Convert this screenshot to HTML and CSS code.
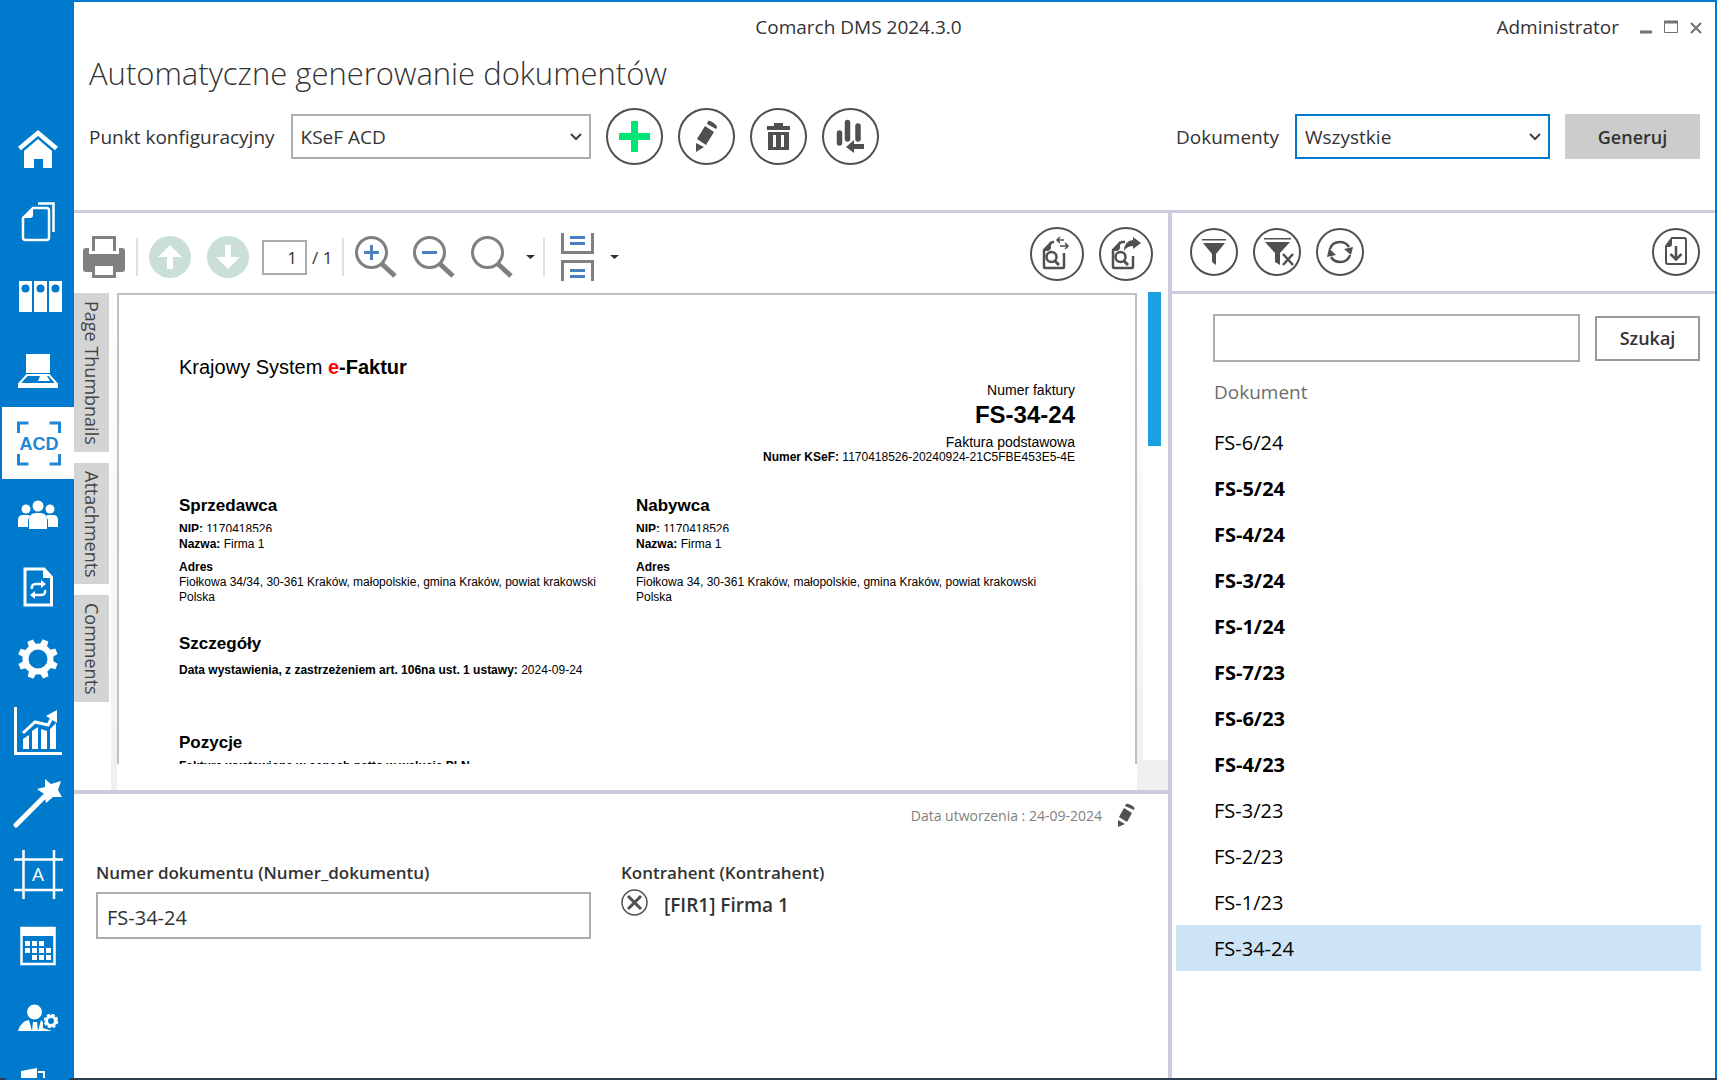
FILE: index.html
```html
<!DOCTYPE html>
<html lang="pl">

<head>
    <meta charset="UTF-8">
    <meta name="viewport" content="width=device-width, initial-scale=1.0">
    <title>Comarch DMS 2024.3.0</title>
    <link rel="stylesheet" href="styles.css">
</head>

<body>
    <div class="window">
        <nav class="sidebar">
            <a href="#" aria-label="Start">
                <svg viewBox="0 0 74 72">
                    <path d="M19.500 29.500 38 14 56.500 29.500" fill="none" stroke="#fff" stroke-width="4.500" />
                    <path d="M38 20 52 32V49H43V40H34V49H24V32Z" />
                </svg>
            </a>
            <a href="#" aria-label="Dokumenty">
                <svg viewBox="0 0 74 72">
                    <path d="M38 12.500H53.500V41" fill="none" stroke="#fff" stroke-width="2.500" />
                    <path d="M33 17H46.500Q49 17 49 19.500V46.500Q49 49 46.500 49H25.500Q23 49 23 46.500V27Z" fill="none" stroke="#fff" stroke-width="2.500" />
                    <path d="M33 17V24Q33 27 30 27H23Z" />
                </svg>
            </a>
            <a href="#" aria-label="Segregatory">
                <svg viewBox="0 0 74 72">
                    <path d="M19 18H32V49H19ZM34 18H47V49H34ZM49 18H62V49H49Z" />
                    <g class="cut">
                        <circle cx="25.500" cy="25.500" r="4" />
                        <circle cx="40.500" cy="25.500" r="4" />
                        <circle cx="55.500" cy="25.500" r="4" />
                    </g>
                </svg>
            </a>
            <a href="#" aria-label="Stanowisko">
                <svg viewBox="0 0 74 72">
                    <path d="M26 19H50V38H26Z" />
                    <path d="M27 40H49L57 49V52H19V49Z" fill="none" stroke="#fff" stroke-width="2" />
                    <path d="M19 48H57V52H19Z" />
                    <path d="M40 41H47L50 46H38Z" />
                </svg>
            </a>
            <a href="#" class="active" aria-label="Automatyczne generowanie dokumentów">
                <svg viewBox="0 0 74 72">
                    <path d="M18.500 26V16H28.500M49.500 16H59.500V26M59.500 47V57H49.500M28.500 57H18.500V47" fill="none" stroke="#1f87d6" stroke-width="3" />
                    <text x="39" y="43" class="acd">ACD</text>
                </svg>
            </a>
            <a href="#" aria-label="Pracownicy">
                <svg viewBox="0 0 74 72">
                    <circle cx="26" cy="30" r="4.500" />
                    <circle cx="50" cy="30" r="4.500" />
                    <circle cx="38" cy="27" r="5.500" />
                    <path d="M18 48V41Q18 36 23 36H28Q31 36 29 39 28 40 28 43V48ZM58 48V41Q58 36 53 36H48Q45 36 47 39 48 40 48 43V48Z" />
                    <path d="M29 50V41Q29 34 36 34H40Q47 34 47 41V50Z" />
                </svg>
            </a>
            <a href="#" aria-label="Obieg">
                <svg viewBox="0 0 74 72">
                    <path d="M25 18H44L51.500 26V54H25Z" fill="none" stroke="#fff" stroke-width="3" />
                    <path d="M43 17 53 27H43Z" />
                    <path d="M32 38Q31 33 36 33H42M45 39Q46 44 41 44H35" fill="none" stroke="#fff" stroke-width="2.500" />
                    <path d="M41 29 46 33 41 37ZM35 40 30 44 35 48Z" />
                </svg>
            </a>
            <a href="#" aria-label="Ustawienia">
                <svg viewBox="0 0 74 72">
                    <circle cx="38" cy="36" r="12.500" fill="none" stroke="#fff" stroke-width="6" />
                    <path d="M34 23 35 16H41L42 23Z" transform="rotate(22 38 36)" />
                    <path d="M34 23 35 16H41L42 23Z" transform="rotate(67 38 36)" />
                    <path d="M34 23 35 16H41L42 23Z" transform="rotate(112 38 36)" />
                    <path d="M34 23 35 16H41L42 23Z" transform="rotate(157 38 36)" />
                    <path d="M34 23 35 16H41L42 23Z" transform="rotate(202 38 36)" />
                    <path d="M34 23 35 16H41L42 23Z" transform="rotate(247 38 36)" />
                    <path d="M34 23 35 16H41L42 23Z" transform="rotate(292 38 36)" />
                    <path d="M34 23 35 16H41L42 23Z" transform="rotate(337 38 36)" />
                </svg>
            </a>
            <a href="#" aria-label="Raporty">
                <svg viewBox="0 0 74 72">
                    <path d="M15.500 12V58.500H62" fill="none" stroke="#fff" stroke-width="3" />
                    <path d="M23 44 29 40V54H23ZM32 36 38 32V54H32ZM41 34 47 36V54H41ZM50 34 56 28V54H50Z" />
                    <path d="M23 38 35 27 48 30 54 19" fill="none" stroke="#fff" stroke-width="3" />
                    <path d="M46 21 57 15V28Z" />
                </svg>
            </a>
            <a href="#" aria-label="Kreator">
                <svg viewBox="0 0 74 72">
                    <path d="M16 58 44 30" fill="none" stroke="#fff" stroke-width="5" stroke-linecap="round" />
                    <path d="M45 12 51 17 61 14 58 23 62 30 53 30 46 36 44 27 37 22 45 20Z" />
                </svg>
            </a>
            <a href="#" aria-label="Szablony">
                <svg viewBox="0 0 74 72">
                    <path d="M14 20.500H63M14 51H63M23.500 11V60M54 11V60" fill="none" stroke="#fff" stroke-width="2.500" />
                    <text x="38" y="42" class="letter">A</text>
                </svg>
            </a>
            <a href="#" aria-label="Kalendarz">
                <svg viewBox="0 0 74 72">
                    <path d="M21.500 17H54.500V53H21.500Z" fill="none" stroke="#fff" stroke-width="2.500" />
                    <path d="M21 16H55V25H21Z" />
                    <path d="M25 30h5v5h-5zM32 30h5v5h-5zM39 30h5v5h-5zM25 37h5v5h-5zM32 37h5v5h-5zM39 37h5v5h-5zM46 37h5v5h-5zM32 44h5v5h-5zM39 44h5v5h-5zM46 44h5v5h-5z" />
                </svg>
            </a>
            <a href="#" aria-label="Uprawnienia">
                <svg viewBox="0 0 74 72">
                    <circle cx="34.500" cy="29" r="7.500" />
                    <path d="M18 48Q21 38 29 37L32 48ZM33 39H37L38 48H32ZM41 37 43 39 43 45 52 48H38Z" />
                    <circle cx="51" cy="38" r="4.500" fill="none" stroke="#fff" stroke-width="3" />
                    <circle cx="51" cy="38" r="6" fill="none" stroke="#fff" stroke-width="2.500" stroke-dasharray="3 1.700" />
                </svg>
            </a>
            <a href="#" aria-label="Biblioteka">
                <svg viewBox="0 0 74 72">
                    <path d="M21 16 37 13V40H21Z" />
                    <path d="M38 17H44V40" fill="none" stroke="#fff" stroke-width="2" />
                </svg>
            </a>
        </nav>

        <main class="main">
            <header class="header">
                <div class="titlebar">
                    <span class="app-name">Comarch DMS 2024.3.0</span>
                    <span class="user">Administrator</span>
                    <button type="button" class="win-btn" aria-label="Minimalizuj">
                        <svg viewBox="0 0 14 14"><path d="M1 12H13" stroke-width="3" /></svg>
                    </button>
                    <button type="button" class="win-btn" aria-label="Maksymalizuj">
                        <svg viewBox="0 0 14 14"><path d="M.500 2H13.500V12.500H.500Z" /><path d="M0 2H14" stroke-width="3" /></svg>
                    </button>
                    <button type="button" class="win-btn" aria-label="Zamknij">
                        <svg viewBox="0 0 14 14"><path d="M2 3 12 13M12 3 2 13" stroke-width="2" /></svg>
                    </button>
                </div>
                <h1>Automatyczne generowanie dokumentów</h1>
                <div class="config">
                    <label for="point">Punkt konfiguracyjny</label>
                    <div class="select point">
                        <select id="point"><option>KSeF ACD</option></select>
                        <svg viewBox="0 0 12 8"><path d="M1 1 6 6 11 1" /></svg>
                    </div>
                    <div class="config-actions">
                        <button type="button" class="round" aria-label="Dodaj">
                            <svg viewBox="0 0 57 57"><path d="M25 13h7v12h12v7H32v12h-7V32H13v-7h12z" fill="#00e676" /></svg>
                        </button>
                        <button type="button" class="round" aria-label="Edytuj">
                            <svg viewBox="0 0 57 57">
                                <path d="M30 13Q32 12 38 17 40 19 38 21L29 16ZM27 18 36 24 28 37 19 31ZM18 35 26 39 18 44Z" />
                            </svg>
                        </button>
                        <button type="button" class="round" aria-label="Usuń">
                            <svg viewBox="0 0 57 57">
                                <path d="M24 15H33V18H40V22H17V18H24Z" />
                                <path d="M18 24H39V42H18ZM23 27V39H26V27ZM31 27V39H34V27Z" fill-rule="evenodd" />
                            </svg>
                        </button>
                        <button type="button" class="round" aria-label="Kolejność">
                            <svg viewBox="0 0 57 57">
                                <path d="M17.500 25V35M25.500 14.500V31M36 18V31" fill="none" stroke="#505050" stroke-width="5.500" stroke-linecap="round" />
                                <path d="M24 39 32 32V36H42V41H32V45Z" />
                            </svg>
                        </button>
                    </div>
                    <label for="docs">Dokumenty</label>
                    <div class="select docs">
                        <select id="docs"><option>Wszystkie</option></select>
                        <svg viewBox="0 0 12 8"><path d="M1 1 6 6 11 1" /></svg>
                    </div>
                    <button type="button" class="generate">Generuj</button>
                </div>
            </header>

            <div class="content">
                <section class="left">
                    <div class="toolbar">
                        <button type="button" class="tool" aria-label="Drukuj">
                            <svg viewBox="0 0 42 42">
                                <path d="M0 15Q0 12 3 12H6V18H36V12H39Q42 12 42 15V33Q42 36 39 36H3Q0 36 0 33Z" fill="#808080" />
                                <path d="M10.500 15V1.500H31.500V15" fill="#fff" stroke="#808080" stroke-width="3" />
                                <path d="M10.500 28.500H31.500V40.500H10.500Z" fill="#fff" stroke="#808080" stroke-width="3" />
                            </svg>
                        </button>
                        <span class="sep"></span>
                        <button type="button" class="tool gap" aria-label="Poprzednia strona">
                            <svg viewBox="0 0 42 42">
                                <circle cx="21" cy="21" r="21" fill="#cadfd8" />
                                <path d="M21 9 33 21H24V33H18V21H9Z" fill="#fff" />
                            </svg>
                        </button>
                        <button type="button" class="tool gap" aria-label="Następna strona">
                            <svg viewBox="0 0 42 42">
                                <circle cx="21" cy="21" r="21" fill="#cadfd8" />
                                <path d="M21 33 33 21H24V9H18V21H9Z" fill="#fff" />
                            </svg>
                        </button>
                        <input type="text" class="page-no" value="1" aria-label="Strona">
                        <span class="page-count">/ 1</span>
                        <span class="sep"></span>
                        <button type="button" class="tool gap" aria-label="Powiększ">
                            <svg viewBox="0 0 42 42" class="lens">
                                <circle cx="16.500" cy="16.500" r="15" />
                                <path d="M27 28 40 40" stroke-width="5" />
                                <path d="M16.500 9V24M9 16.500H24" class="sign" />
                            </svg>
                        </button>
                        <button type="button" class="tool gap" aria-label="Pomniejsz">
                            <svg viewBox="0 0 42 42" class="lens">
                                <circle cx="16.500" cy="16.500" r="15" />
                                <path d="M27 28 40 40" stroke-width="5" />
                                <path d="M9 16.500H24" class="sign" />
                            </svg>
                        </button>
                        <button type="button" class="tool" aria-label="Skala">
                            <svg viewBox="0 0 42 42" class="lens">
                                <circle cx="16.500" cy="16.500" r="15" />
                                <path d="M27 28 40 40" stroke-width="5" />
                            </svg>
                        </button>
                        <svg class="caret" viewBox="0 0 9 4"><path d="M0 0H9L4.500 4Z" /></svg>
                        <span class="sep"></span>
                        <button type="button" class="tool fit" aria-label="Układ stron">
                            <svg viewBox="0 0 33 48">
                                <path d="M1.500 0V19.500H31.500V0M1.500 48V28.500H31.500V48" fill="none" stroke="#808080" stroke-width="3" />
                                <path d="M9 4.500H24M9 10.500H24M9 37.500H24M9 43.500H24" fill="none" stroke="#4a80bd" stroke-width="3" />
                            </svg>
                        </button>
                        <svg class="caret" viewBox="0 0 9 4"><path d="M0 0H9L4.500 4Z" /></svg>
                        <div class="toolbar-end">
                            <button type="button" class="round medium" aria-label="Zamień dokument">
                                <svg viewBox="0 0 54 54">
                                    <path d="M22 15 14 23V40Q14 41 15 41H33Q34 41 34 40V26M22 15H24" fill="none" stroke="#505050" stroke-width="2.500" />
                                    <path d="M21 14V20Q21 24 17 24H13Z" />
                                    <circle cx="21.500" cy="30" r="5" fill="none" stroke="#505050" stroke-width="2.500" />
                                    <path d="M25 34 29 38" stroke="#505050" stroke-width="3" />
                                    <path d="M34 13H27M30 10 27 13 30 16M30 19H38M35 16 38 19 35 22" fill="none" stroke="#505050" stroke-width="1.500" />
                                </svg>
                            </button>
                            <button type="button" class="round medium" aria-label="Przekaż dokument">
                                <svg viewBox="0 0 54 54">
                                    <path d="M22 15 14 23V40Q14 41 15 41H33Q34 41 34 40V29M22 15H26" fill="none" stroke="#505050" stroke-width="2.500" />
                                    <path d="M21 14V20Q21 24 17 24H13Z" />
                                    <circle cx="21.500" cy="30" r="5" fill="none" stroke="#505050" stroke-width="2.500" />
                                    <path d="M25 34 29 38" stroke="#505050" stroke-width="3" />
                                    <path d="M25 24Q25 14 34 13V10L42 16 34 22V19Q28 19 25 24Z" />
                                </svg>
                            </button>
                        </div>
                    </div>

                    <div class="viewer">
                        <div class="tabs">
                            <button type="button">Page Thumbnails</button>
                            <button type="button">Attachments</button>
                            <button type="button">Comments</button>
                        </div>
                        <div class="edge"></div>
                        <article class="page">
                            <p class="ksef">Krajowy System <b><span class="red">e</span>-Faktur</b></p>
                            <div class="invoice-no">
                                <p class="caption">Numer faktury</p>
                                <p class="number">FS-34-24</p>
                                <p class="kind">Faktura podstawowa</p>
                                <p><b>Numer KSeF:</b> 1170418526-20240924-21C5FBE453E5-4E</p>
                            </div>
                            <div class="parties">
                                <div>
                                    <h2>Sprzedawca</h2>
                                    <p class="nip"><b>NIP:</b> 1170418526</p>
                                    <p><b>Nazwa:</b> Firma 1</p>
                                    <h3>Adres</h3>
                                    <p>Fiołkowa 34/34, 30-361 Kraków, małopolskie, gmina Kraków, powiat krakowski</p>
                                    <p>Polska</p>
                                </div>
                                <div>
                                    <h2>Nabywca</h2>
                                    <p class="nip"><b>NIP:</b> 1170418526</p>
                                    <p><b>Nazwa:</b> Firma 1</p>
                                    <h3>Adres</h3>
                                    <p>Fiołkowa 34, 30-361 Kraków, małopolskie, gmina Kraków, powiat krakowski</p>
                                    <p>Polska</p>
                                </div>
                            </div>
                            <h2 class="details-title">Szczegóły</h2>
                            <p><b>Data wystawienia, z zastrzeżeniem art. 106na ust. 1 ustawy:</b> 2024-09-24</p>
                            <h2 class="items-title">Pozycje</h2>
                            <p><b>Faktura wystawiona w cenach netto w walucie PLN</b></p>
                        </article>
                        <div class="edge"></div>
                        <div class="scroll"><div class="thumb"></div><div class="corner"></div></div>
                    </div>

                    <form class="details">
                        <div class="created">
                            <span>Data utworzenia : 24-09-2024</span>
                            <button type="button" aria-label="Edytuj atrybuty">
                                <svg viewBox="0 0 17 24">
                                    <path d="M8 1Q10 0 16 4 17 5 16 7L7 3ZM6 5 14 10 9 19 1 14ZM0 17 7 21 0 24Z" />
                                </svg>
                            </button>
                        </div>
                        <div class="fields">
                            <div class="field">
                                <label for="doc-no">Numer dokumentu (Numer_dokumentu)</label>
                                <input type="text" id="doc-no" value="FS-34-24">
                            </div>
                            <div class="field">
                                <span class="field-name">Kontrahent (Kontrahent)</span>
                                <div class="contractor">
                                    <button type="button" aria-label="Usuń kontrahenta">
                                        <svg viewBox="0 0 27 27">
                                            <circle cx="13.500" cy="13.500" r="12.500" stroke-width="1.500" />
                                            <path d="M7 7 20 20M20 7 7 20" stroke-width="3" />
                                        </svg>
                                    </button>
                                    <span>[FIR1] Firma 1</span>
                                </div>
                            </div>
                        </div>
                    </form>
                </section>

                <section class="right">
                    <div class="list-toolbar">
                        <button type="button" class="round small" aria-label="Filtruj">
                            <svg viewBox="0 0 48 48">
                                <path d="M12 11H36V12.500H12ZM13 15H35L26 26V37L22 34V26Z" />
                            </svg>
                        </button>
                        <button type="button" class="round small" aria-label="Wyczyść filtr">
                            <svg viewBox="0 0 48 48">
                                <path d="M11 10H38V11.500H11ZM12 14H37L27 25V37L22 34V25Z" />
                                <path d="M30 26 40 37M40 26 30 37" stroke="#505050" stroke-width="2.500" />
                            </svg>
                        </button>
                        <button type="button" class="round small" aria-label="Odśwież">
                            <svg viewBox="0 0 48 48">
                                <path d="M14 21Q16 14 24 14 30 14 33 19M34 27Q32 34 24 34 18 34 15 29" fill="none" stroke="#505050" stroke-width="2.500" />
                                <path d="M28 21 37 19 35 27ZM20 27 11 29 13 20Z" />
                            </svg>
                        </button>
                        <button type="button" class="round small last" aria-label="Importuj">
                            <svg viewBox="0 0 48 48">
                                <path d="M20 10H32Q34 10 34 12V34Q34 36 32 36H16Q14 36 14 34V18Z" fill="none" stroke="#505050" stroke-width="2" />
                                <path d="M20 10V16Q20 19 17 19H14Z" />
                                <path d="M24 18V31M18.500 26 24 31.500 29.500 26" fill="none" stroke="#505050" stroke-width="2.500" />
                            </svg>
                        </button>
                    </div>
                    <form class="search">
                        <input type="text" aria-label="Szukany dokument">
                        <button type="button">Szukaj</button>
                    </form>
                    <table class="list">
                        <thead><tr><th>Dokument</th></tr></thead>
                        <tbody>
                            <tr><td>FS-6/24</td></tr>
                            <tr class="new"><td>FS-5/24</td></tr>
                            <tr class="new"><td>FS-4/24</td></tr>
                            <tr class="new"><td>FS-3/24</td></tr>
                            <tr class="new"><td>FS-1/24</td></tr>
                            <tr class="new"><td>FS-7/23</td></tr>
                            <tr class="new"><td>FS-6/23</td></tr>
                            <tr class="new"><td>FS-4/23</td></tr>
                            <tr><td>FS-3/23</td></tr>
                            <tr><td>FS-2/23</td></tr>
                            <tr><td>FS-1/23</td></tr>
                            <tr class="selected"><td>FS-34-24</td></tr>
                        </tbody>
                    </table>
                </section>
            </div>
        </main>
    </div>
    <div class="taskbar"><span></span></div>
</body>

</html>
```
FILE: styles.css
```css
* {
    box-sizing: border-box;
}

body {
    margin: 0;
    height: 100vh;
    display: flex;
    flex-direction: column;
    overflow: hidden;
    background: #fff;
    color: #333;
    font-family: "Open Sans", "Noto Sans", sans-serif;
    font-size: 19px;
}

h1, h2, h3, p {
    margin: 0;
}

svg {
    display: block;
}

button, input, select {
    font: inherit;
    color: inherit;
    margin: 0;
    padding: 0;
    border: none;
    border-radius: 0;
    background: none;
}

button {
    cursor: pointer;
}

.window {
    flex: 1;
    min-height: 0;
    display: flex;
    border: 2px solid #007acc;
    border-left: none;
    border-bottom: none;
}

.taskbar {
    height: 2px;
    padding-left: 6px;
    background: #2f3e4e;
}

.taskbar span {
    display: block;
    width: 63px;
    height: 2px;
    background: #007acc;
}

/* sidebar */
.sidebar {
    flex: none;
    width: 74px;
    padding-top: 117px;
    overflow: hidden;
    background: #007acc;
}

.sidebar a {
    display: block;
    height: 72px;
}

.sidebar svg {
    width: 74px;
    height: 72px;
    fill: #fff;
}

.sidebar .cut {
    fill: #007acc;
}

.sidebar .active {
    background: #fff;
    border-left: 2px solid #007acc;
}

.sidebar .active svg {
    margin-left: -2px;
}

.acd {
    fill: #1f87d6;
    font: bold 18px "Liberation Sans", sans-serif;
    text-anchor: middle;
}

.letter {
    font-size: 19px;
    text-anchor: middle;
}

/* header */
.main {
    flex: 1;
    min-width: 0;
    display: flex;
    flex-direction: column;
}

.header {
    height: 211px;
    border-bottom: 3px solid #cbcddc;
    padding: 0 15px;
}

.titlebar {
    display: grid;
    grid-template-columns: 1fr auto 1fr 14px 14px 14px;
    align-items: center;
    height: 50px;
    column-gap: 11px;
    margin-right: -3px;
}

.app-name {
    grid-column: 2;
}

.user {
    justify-self: end;
    margin-right: 9px;
}

.win-btn svg {
    width: 14px;
    height: 14px;
    fill: none;
    stroke: #707070;
    stroke-width: 1;
}

h1 {
    font-size: 31px;
    font-weight: 300;
    line-height: 42px;
    color: #333;
}

.config {
    display: flex;
    align-items: center;
    margin-top: 14px;
    height: 57px;
}

.config-actions {
    display: flex;
    gap: 15px;
    margin: 0 auto 0 15px;
}

.select {
    position: relative;
    height: 45px;
    margin-left: 16px;
}

.select select {
    appearance: none;
    width: 100%;
    height: 45px;
    padding: 0 8px;
    border: 2px solid #abadb3;
    background: #fff;
}

.select svg {
    position: absolute;
    right: 9px;
    top: 19px;
    width: 12px;
    height: 8px;
    fill: none;
    stroke: #404040;
    stroke-width: 2;
    pointer-events: none;
}

.point {
    width: 300px;
}

.docs {
    width: 255px;
}

.docs select {
    border-color: #007acc;
}

.generate {
    width: 135px;
    height: 45px;
    margin-left: 15px;
    background: #ccc;
    font-size: 18px;
    font-weight: 600;
}

.round {
    flex: none;
    width: 57px;
    height: 57px;
    border: 2px solid #505050;
    border-radius: 50%;
}

.round svg {
    width: 57px;
    height: 57px;
    margin: -2px;
    fill: #505050;
}

.round.medium, .medium svg {
    width: 54px;
    height: 54px;
}

.round.small, .small svg {
    width: 48px;
    height: 48px;
}

/* document preview */
.content {
    flex: 1;
    min-height: 0;
    display: flex;
}

.left {
    flex: 1;
    min-width: 0;
    display: flex;
    flex-direction: column;
}

.toolbar {
    flex: none;
    display: flex;
    align-items: center;
    height: 79px;
    padding: 9px 15px 0 9px;
}

.tool svg {
    width: 42px;
    height: 42px;
}

.tool.gap {
    margin-right: 16px;
}

.sep {
    width: 2px;
    height: 38px;
    margin: 0 11px;
    background: #e0e0e0;
}

.page-no {
    width: 45px;
    height: 35px;
    margin-left: -3px;
    padding-right: 8px;
    border: 2px solid #ababab;
    text-align: right;
    font-size: 17px;
}

.page-count {
    width: 22px;
    margin-left: 5px;
    margin-right: -3px;
    font-size: 17px;
    white-space: nowrap;
}

.lens {
    fill: none;
    stroke: #808080;
    stroke-width: 3;
}

.lens .sign {
    stroke: #4a80bd;
}

.caret {
    flex: none;
    width: 9px;
    height: 4px;
    margin-left: 13px;
    fill: #303030;
}

.caret + .sep {
    margin: 0 16px 0 8px;
}

.tool.fit svg {
    width: 33px;
    height: 48px;
}

.fit + .caret {
    margin-left: 16px;
}

.toolbar-end {
    display: flex;
    gap: 15px;
    margin: -6px 0 0 auto;
}

.viewer {
    flex: 1;
    min-height: 0;
    display: flex;
}

.tabs {
    flex: none;
    width: 37px;
    display: flex;
    flex-direction: column;
    align-items: flex-start;
    gap: 11px;
    padding-top: 1px;
}

.tabs button {
    width: 35px;
    padding: 8px 0 7px;
    background: #d4d4d4;
    writing-mode: vertical-rl;
    line-height: 35px;
    color: #444;
    font-size: 18px;
}

.edge {
    flex: none;
    width: 6px;
    background: linear-gradient(#fff, #f0f0f0);
}

.page {
    flex: 1;
    min-width: 0;
    margin: 1px 0 26px;
    padding: 59px 60px 0;
    overflow: hidden;
    border: 2px solid #c0c0c0;
    border-bottom: none;
    background: #fff;
    color: #000;
    font-family: "Liberation Sans", Arial, sans-serif;
    font-size: 12px;
    line-height: 15px;
}

.ksef {
    font-size: 20px;
    line-height: 26px;
}

.red {
    color: #f00;
}

.invoice-no {
    margin-top: 1px;
    text-align: right;
}

.caption {
    font-size: 14px;
    line-height: 18px;
}

.number {
    font-size: 24px;
    font-weight: bold;
    line-height: 32px;
    margin-bottom: 3px;
}

.kind {
    font-size: 14px;
    line-height: 16px;
}

.page h2 {
    font-size: 17px;
    line-height: 22px;
    margin-bottom: 5px;
}

.page h3 {
    font-size: 12px;
    line-height: 15px;
    margin-top: 8px;
}

.parties {
    display: grid;
    grid-template-columns: 1fr 1fr;
    gap: 18px;
    margin-top: 30px;
}

.nip {
    height: 10px;
    margin-bottom: 5px;
    overflow: hidden;
}

.page .details-title {
    margin-top: 28px;
    margin-bottom: 8px;
}

.page .items-title {
    margin-top: 54px;
}

.scroll {
    flex: none;
    width: 25px;
    display: flex;
    flex-direction: column;
    justify-content: space-between;
}

.thumb {
    width: 13px;
    height: 154px;
    margin-left: 5px;
    background: #1ba1e2;
}

.corner {
    height: 30px;
    margin-left: -4px;
    background: #f0f0f0;
}

/* attributes */
.details {
    flex: none;
    height: 288px;
    border-top: 4px solid #cbcddc;
    padding: 8px 33px 0 22px;
}

.created {
    display: flex;
    justify-content: flex-end;
    align-items: center;
    gap: 16px;
    height: 26px;
    font-size: 14px;
    color: #808080;
}

.created svg {
    width: 17px;
    height: 24px;
    fill: #505050;
}

.fields {
    display: flex;
    gap: 30px;
    margin-top: 32px;
}

.field:first-child {
    width: 495px;
}

.field label, .field-name {
    display: block;
    font-size: 17px;
    font-weight: 600;
    line-height: 26px;
}

.field input {
    width: 100%;
    height: 47px;
    margin-top: 6px;
    padding: 4px 9px 0;
    border: 2px solid #abadb3;
    font-size: 20px;
}

.contractor {
    display: flex;
    gap: 16px;
    align-items: flex-start;
    padding-top: 3px;
    font-weight: 600;
    line-height: 33px;
}

.contractor svg {
    width: 27px;
    height: 27px;
    fill: none;
    stroke: #505050;
}

/* document list */
.right {
    flex: none;
    width: 547px;
    border-left: 4px solid #cbcddc;
}

.list-toolbar {
    display: flex;
    align-items: center;
    gap: 15px;
    height: 81px;
    padding: 0 15px 1px 18px;
    border-bottom: 3px solid #cbcddc;
}

.list-toolbar .last {
    margin-left: auto;
}

.search {
    display: flex;
    align-items: center;
    gap: 15px;
    padding: 20px 15px 0 41px;
}

.search input {
    flex: 1;
    min-width: 0;
    height: 48px;
    padding: 0 9px;
    border: 2px solid #abadb3;
}

.search button {
    width: 105px;
    height: 45px;
    border: 2px solid #999;
    font-size: 18px;
    font-weight: 600;
}

.list {
    width: 525px;
    margin: 4px 0 0 4px;
    border-collapse: collapse;
    color: #000;
}

.list th, .list td {
    padding: 0 0 0 38px;
    height: 46px;
    text-align: left;
    font-size: 20px;
}

.list th {
    height: 53px;
    padding-bottom: 2px;
    font-size: 19px;
    font-weight: 400;
    color: #6d6d6d;
}

.new {
    font-weight: 700;
}

.selected {
    background: #cde3f6;
}
```
